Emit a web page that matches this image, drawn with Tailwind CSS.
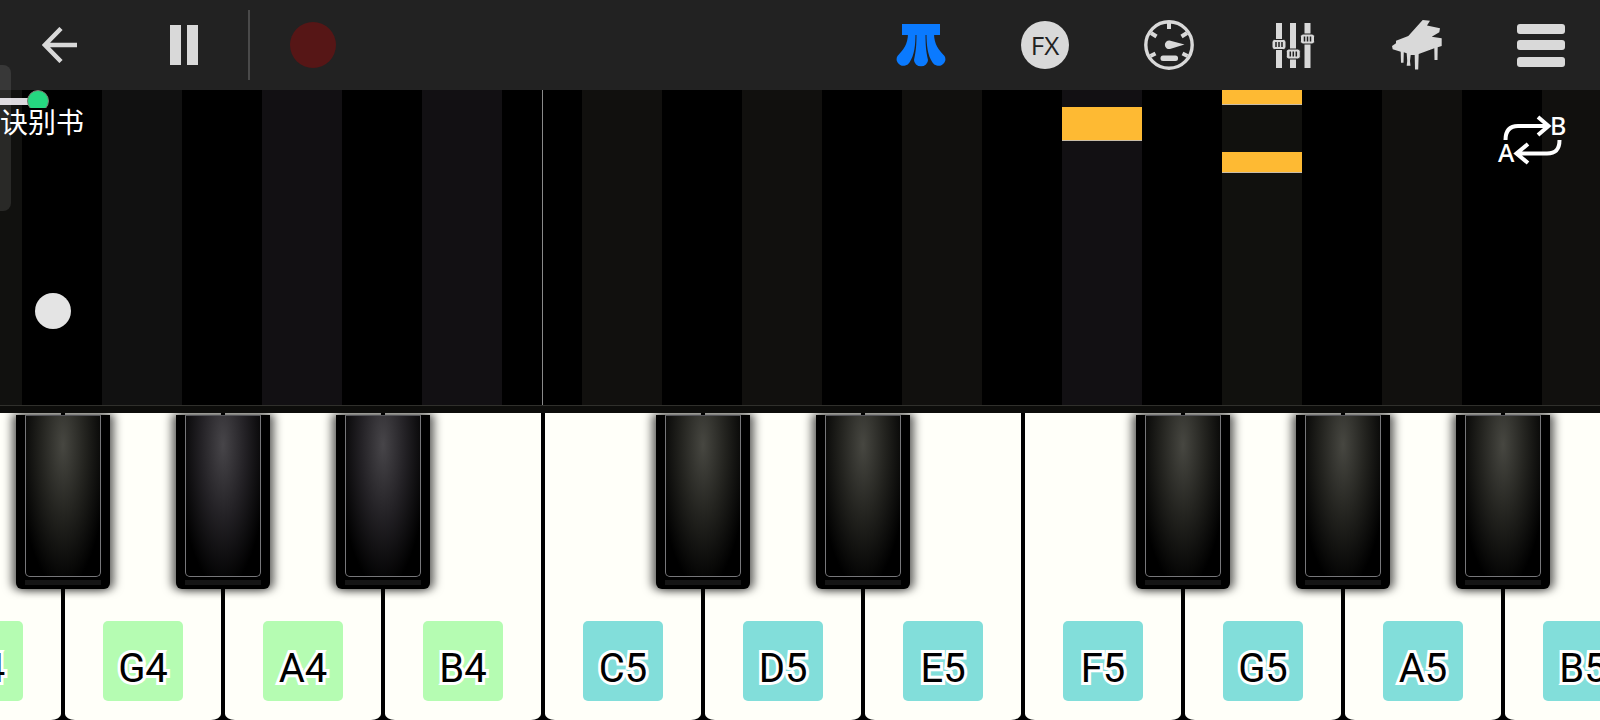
<!DOCTYPE html>
<html lang="zh">
  <head>
    <meta charset="utf-8" />
    <meta name="viewport" content="width=device-width, initial-scale=1" />
    <title>诀别书</title>
    <script src="https://cdn.jsdelivr.net/npm/@tailwindcss/browser@4"></script>
  </head>

  <body class="flex min-h-screen flex-col overflow-x-hidden bg-black font-['Roboto','Noto_Sans_CJK_SC',sans-serif]">
    <header class="flex h-[90px] items-center justify-between bg-[#222222] pr-[9px] text-[#d9d9d9]">
      <div class="flex items-center">
        <button class="flex h-[90px] w-[120px] items-center justify-center" aria-label="Back">
          <svg width="36" height="36" viewBox="0 0 36 36" fill="none" stroke="currentColor" stroke-width="4.5">
            <path d="M35 18H4M19 1.5L2.8 18L19 34.5" />
          </svg>
        </button>
        <button class="flex h-[90px] w-[128px] items-center justify-center gap-[6px]" aria-label="Pause">
          <span class="h-10 w-[11px] bg-current"></span>
          <span class="h-10 w-[11px] bg-current"></span>
        </button>
        <div class="h-[70px] w-[2px] bg-[#4a4a4a]"></div>
        <button class="flex h-[90px] w-[126px] items-center justify-center" aria-label="Record">
          <span class="size-[46px] rounded-full bg-[#561616]"></span>
        </button>
      </div>

      <div class="flex items-center gap-6">
        <button class="flex h-[90px] w-[100px] items-center justify-center text-[#0a7aff]" aria-label="Falling notes">
          <svg width="50" height="50" viewBox="0 0 50 50" fill="currentColor">
            <path d="M6 4h38v11H6z" />
            <path d="M20.500 13h9c0 12 .5 18 2.500 27a7 6.300 0 0 1-14 0C20 31 20.500 25 20.500 13z" />
            <path d="M12 13h7.500c0 12-1 22-6 29.500a6.800 6.500 0 0 1-12-6.500C7 30 12 25 12 13z" />
            <path d="M38 13h-7.500c0 12 1 22 6 29.500a6.800 6.500 0 0 0 12-6.500C43 30 38 25 38 13z" />
          </svg>
        </button>
        <button class="flex h-[90px] w-[100px] items-center justify-center" aria-label="Effects">
          <span class="flex size-12 items-center justify-center rounded-full bg-[#d9d9d9] font-['Open_Sans',sans-serif] text-[26px] leading-none text-[#222222]">FX</span>
        </button>
        <button class="flex h-[90px] w-[100px] items-center justify-center" aria-label="Speed">
          <svg width="50" height="50" viewBox="0 0 50 50" fill="none" stroke="currentColor">
            <circle cx="25" cy="25" r="23.2" stroke-width="3.400" />
            <path stroke-width="4" d="M25 3v6M7 13l5.500 3.500M43 13l-5.500 3.500M6.500 36l5-2.500M43.500 36l-5-2.500" />
            <path fill="currentColor" stroke="none" d="M25.500 20.500L40.500 24.500L26 29a4.300 4.300 0 1 1-.5-8.500z" />
            <rect x="16.500" y="35.500" width="17.500" height="5.500" rx="2.500" fill="currentColor" stroke="none" />
          </svg>
        </button>
        <button class="flex h-[90px] w-[100px] items-center justify-center" aria-label="Mixer">
          <svg width="50" height="50" viewBox="0 0 50 50" fill="currentColor">
            <path d="M8 3h6v45H8zM22 3h6v45h-6zM36.500 3h6v45h-6z" />
            <g stroke="#222222">
              <rect x="4" y="19.500" width="14" height="10" rx="2.500" />
              <rect x="18.300" y="29" width="14" height="10" rx="2.500" />
              <rect x="32.500" y="14" width="14" height="10" rx="2.500" />
            </g>
            <path stroke="#222222" stroke-width="1.500" d="M8 22v5M11 22v5M14 22v5M22.300 31.500v5M25.300 31.500v5M28.300 31.500v5M36.500 16.500v5M39.500 16.500v5M42.500 16.500v5" />
          </svg>
        </button>
        <button class="flex h-[90px] w-[100px] items-center justify-center" aria-label="Instrument">
          <svg width="50" height="50" viewBox="0 0 50 50" fill="currentColor">
            <path d="M30.700 0L38 .7L35 5.500L48 8.300L47.300 12.300L39.700 16.700L49.700 18.300V26L45.700 27.300L45.500 40H42.500L42.300 28.300L26.700 34L26.200 49.500H23L22.700 35H18.700L18 41L18.500 45.700H14.700L15.200 41L14.700 33.300L11.800 32.300L11.500 42.700H9L8.700 31.700L.7 29.300L0 26L4 23.300V20.700L16.300 16z" />
          </svg>
        </button>
        <button class="flex h-[90px] w-[100px] items-center justify-center" aria-label="Menu">
          <svg width="48" height="44" viewBox="0 0 48 44" fill="currentColor">
            <rect y="1" width="48" height="10" rx="3" />
            <rect y="17" width="48" height="10" rx="3" />
            <rect y="34" width="48" height="10" rx="3" />
          </svg>
        </button>
      </div>
    </header>

    <main class="relative flex flex-1 flex-col">
      <section class="relative h-[315px] overflow-hidden">
        <!-- lanes the notes fall through, one per white key -->
        <div id="lanes" class="ml-[-98px] flex h-full w-[calc(100%+160px)]"></div>

        <div class="absolute inset-x-0 top-0">
          <div class="h-[18px] overflow-hidden">
            <input
              type="range"
              min="0"
              max="1000"
              value="17"
              aria-label="Song position"
              class="block h-[22px] w-full appearance-none bg-linear-to-r from-[#dcd9de] to-[#dcd9de] bg-[length:38px_7px] bg-[position:0_center] bg-no-repeat [&::-webkit-slider-thumb]:size-[22px] [&::-webkit-slider-thumb]:appearance-none [&::-webkit-slider-thumb]:rounded-full [&::-webkit-slider-thumb]:border [&::-webkit-slider-thumb]:border-[#7a7a70] [&::-webkit-slider-thumb]:bg-[#25d880]"
            />
          </div>
          <h1 class="text-[28px] leading-[32px] text-white">诀别书</h1>
        </div>

        <button class="absolute top-[25px] right-[33px]" aria-label="Repeat A to B">
          <svg class="overflow-visible" width="69" height="50" viewBox="0 0 69 50" fill="none" stroke="white" stroke-width="4">
            <path d="M7.500 25C7.500 15 12 11 20 11H50M40 2L50.500 11L40 20" />
            <path d="M61.500 25C61.500 34 58 38.500 49 38.500H19M30 29L18.500 38.500L30 48" />
            <g fill="white" stroke="none" class="font-['Noto_Sans',sans-serif] text-[25px] font-medium">
              <text x="0" y="47">A</text>
              <text x="52" y="20">B</text>
            </g>
          </svg>
        </button>

        <div class="absolute top-[203px] left-[35px] size-9 rounded-full bg-[#e4e4e4]"></div>
      </section>

      <div class="h-2 border-t border-[#30302c] bg-[#0d0d0b]"></div>

      <section class="flex min-h-[307px] flex-1 overflow-hidden bg-black">
        <div id="keys" class="ml-[-97px] flex w-[calc(100%+160px)] shrink-0"></div>
      </section>

      <!-- edge handle of the side panel -->
      <div class="absolute top-[-25px] left-0 h-[146px] w-[11px] rounded-r-lg bg-white/10"></div>
    </main>
  </body>

  <script>
    const GREEN = "bg-[#b5fcb2]";
    const CYAN = "bg-[#82deda]";
    const OLIVE = "from-[#474741] via-[#23231f]";
    const VIOLET = "from-[#474549] via-[#232125]";

    // top and height of a note are in px from the top of the roll
    const keys = [
      { name: "F4", tile: GREEN, lane: "bg-[#11110f]", notes: [] },
      { name: "G4", tile: GREEN, lane: "bg-[#111111]", sharp: OLIVE, notes: [] },
      { name: "A4", tile: GREEN, lane: "bg-[#121013]", sharp: VIOLET, notes: [] },
      { name: "B4", tile: GREEN, lane: "bg-[#121013]", sharp: VIOLET, notes: [] },
      { name: "C5", tile: CYAN, lane: "bg-[#11100e]", notes: [] },
      { name: "D5", tile: CYAN, lane: "bg-[#11100e]", sharp: OLIVE, notes: [] },
      { name: "E5", tile: CYAN, lane: "bg-[#11100e]", sharp: OLIVE, notes: [] },
      { name: "F5", tile: CYAN, lane: "bg-[#121013]", notes: [[17, 34]] },
      { name: "G5", tile: CYAN, lane: "bg-[#11110e]", sharp: OLIVE, notes: [[0, 15], [62, 21]] },
      { name: "A5", tile: CYAN, lane: "bg-[#11100e]", sharp: OLIVE, notes: [] },
      { name: "B5", tile: CYAN, lane: "bg-[#11100e]", sharp: OLIVE, notes: [] },
    ];

    function laneHtml(key) {
      const notes = key.notes
        .map(
          ([top, height]) =>
            `<div class="absolute inset-x-0 border-b border-[#c9bda8] bg-[#feba33]" style="top:${top}px;height:${height}px"></div>`,
        )
        .join("");
      const octave = key.name === "C5" ? "shadow-[inset_1px_0_#8a8a8a]" : "";
      return `<div class="flex flex-1 justify-center ${octave}"><div class="relative w-1/2 ${key.lane}">${notes}</div></div>`;
    }

    function keyHtml(key) {
      const sharp = key.sharp
        ? `<button aria-label="${key.name} flat" class="absolute top-[2px] left-[-47px] z-10 h-[174px] w-[94px] rounded-b-md bg-black px-[9px] pb-3 shadow-[-4px_0_8px_1px_rgba(0,0,0,0.5),4px_0_8px_1px_rgba(0,0,0,0.5)]">
            <span class="block h-full rounded-b-[5px] border border-[#77777a] border-t-[#55555a] bg-radial-[ellipse_60%_90%_at_50%_18%] ${key.sharp} to-black"></span>
            <span class="mt-[3px] block h-[5px] bg-[#151515]"></span>
          </button>`
        : "";
      return `<div class="relative flex flex-1 px-[2px]">
          ${sharp}
          <button class="flex flex-1 items-end justify-center rounded-b-[10px_6px] bg-[#fffff9] pb-[19px]">
            <span class="flex h-20 w-20 items-end justify-center rounded-[5px] pb-2 text-[40px] leading-[48px] text-black [-webkit-text-stroke:6px_white] [paint-order:stroke_fill] ${key.tile}">${key.name}</span>
          </button>
        </div>`;
    }

    document.getElementById("lanes").innerHTML = keys.map(laneHtml).join("");
    document.getElementById("keys").innerHTML = keys.map(keyHtml).join("");
  </script>
</html>
